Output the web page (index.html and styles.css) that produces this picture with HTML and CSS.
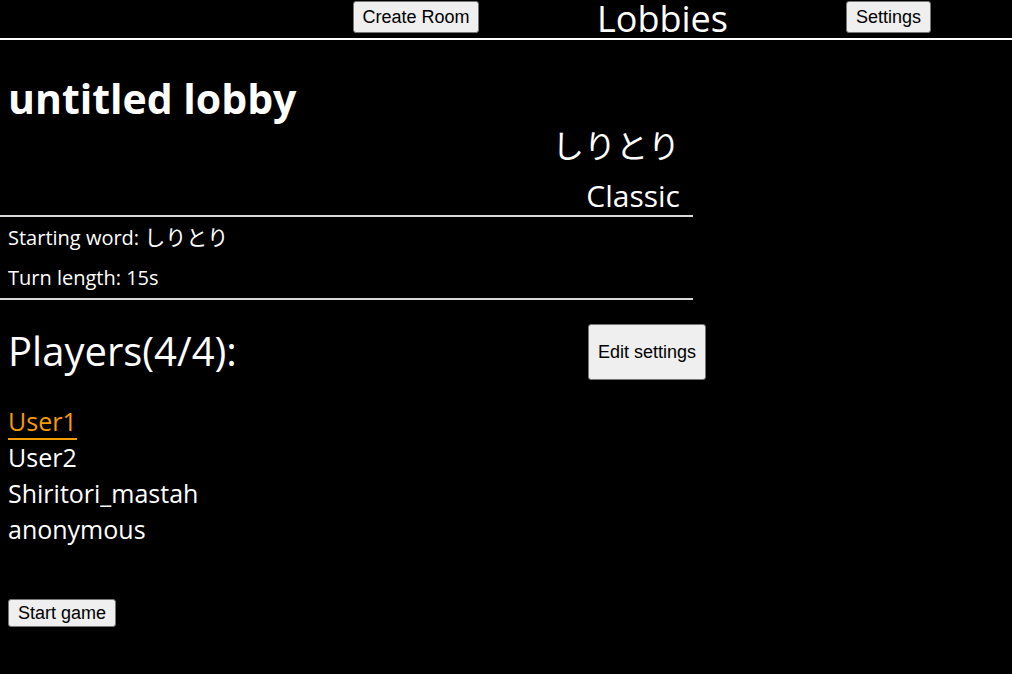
FILE: index.html
```html
<!DOCTYPE html>
<html lang="en">
<head>
<meta charset="utf-8">
<title>Lobbies</title>
<link rel="stylesheet" href="styles.css">
</head>
<body>
<header class="topbar">
  <div class="topbar-left"><button class="btn btn-top">Create Room</button></div>
  <h1 class="topbar-title">Lobbies</h1>
  <div class="topbar-right"><button class="btn btn-top">Settings</button></div>
</header>
<main class="lobby">
  <section class="lobby-info">
    <h2 class="lobby-name">untitled lobby</h2>
    <div class="lobby-game">しりとり</div>
    <div class="lobby-mode">Classic</div>
    <div class="rule"></div>
    <p class="lobby-setting">Starting word: <span class="jp">しりとり</span></p>
    <p class="lobby-setting">Turn length: 15s</p>
    <div class="rule"></div>
  </section>
  <section class="players">
    <div class="players-head">
      <h2 class="players-title">Players(4/4):</h2>
      <button class="btn btn-edit">Edit settings</button>
    </div>
    <ul class="player-list">
      <li class="player"><span class="player-host">User1</span></li>
      <li class="player">User2</li>
      <li class="player">Shiritori_mastah</li>
      <li class="player">anonymous</li>
    </ul>
    <button class="btn btn-start">Start game</button>
  </section>
</main>
</body>
</html>
```
FILE: styles.css
```css
html, body {
  margin: 0;
  padding: 0;
  background: #000;
  color: #fff;
  font-family: "Open Sans", "Noto Sans CJK JP", sans-serif;
}

.btn {
  font-family: "Liberation Sans", Arial, sans-serif;
  font-size: 18px;
  color: #000;
  background: #efefef;
  border: 1px solid #767676;
  border-radius: 3px;
  padding: 0;
  cursor: pointer;
}

.topbar {
  display: grid;
  grid-template-columns: 353px 126px 1fr 85px 81px;
  grid-template-rows: 38px;
  align-items: start;
  height: 38px;
  border-bottom: 2px solid #fff;
}

.topbar-left { grid-column: 2; padding-top: 1px; }
.topbar-right { grid-column: 4; padding-top: 1px; }

.btn-top {
  display: block;
  height: 32px;
  width: 100%;
}

.topbar-title {
  grid-column: 3;
  margin: 0;
  text-align: center;
  font-weight: normal;
  font-size: 36px;
  line-height: 38px;
  white-space: nowrap;
}

.lobby {
  padding: 0 8px;
}

.lobby-info {
  width: 685px;
  margin-left: -8px;
  padding-left: 8px;
}

.lobby-name {
  margin: 0 0 4px;
  padding-top: 38px;
  font-size: 41px;
  font-weight: bold;
  line-height: 40px;
}

.lobby-game {
  text-align: right;
  padding-right: 13px;
  margin-bottom: 6px;
  font-size: 32px;
  line-height: 48px;
}

.lobby-mode {
  text-align: right;
  padding-right: 13px;
  font-size: 30px;
  line-height: 39px;
}

.rule {
  margin-left: -8px;
  height: 2px;
  background: #d8d8d8;
}

.lobby-setting {
  margin: 0;
  font-size: 20px;
  line-height: 40px;
}

.jp {
  font-size: 21px;
}

.players-head {
  width: 698px;
  display: flex;
  justify-content: space-between;
  align-items: center;
  padding-top: 24px;
}

.players-title {
  margin: 0 0 2px;
  font-weight: normal;
  font-size: 40px;
  line-height: 52px;
}

.btn-edit {
  height: 56px;
  width: 118px;
}

.player-list {
  list-style: none;
  margin: 23px 0 0;
  padding: 0;
}

.player {
  font-size: 25px;
  line-height: 36px;
}

.player-host {
  color: #f59c00;
  border-bottom: 2px solid #f59c00;
}

.btn-start {
  display: block;
  margin-top: 52px;
  height: 28px;
  width: 108px;
}
```
